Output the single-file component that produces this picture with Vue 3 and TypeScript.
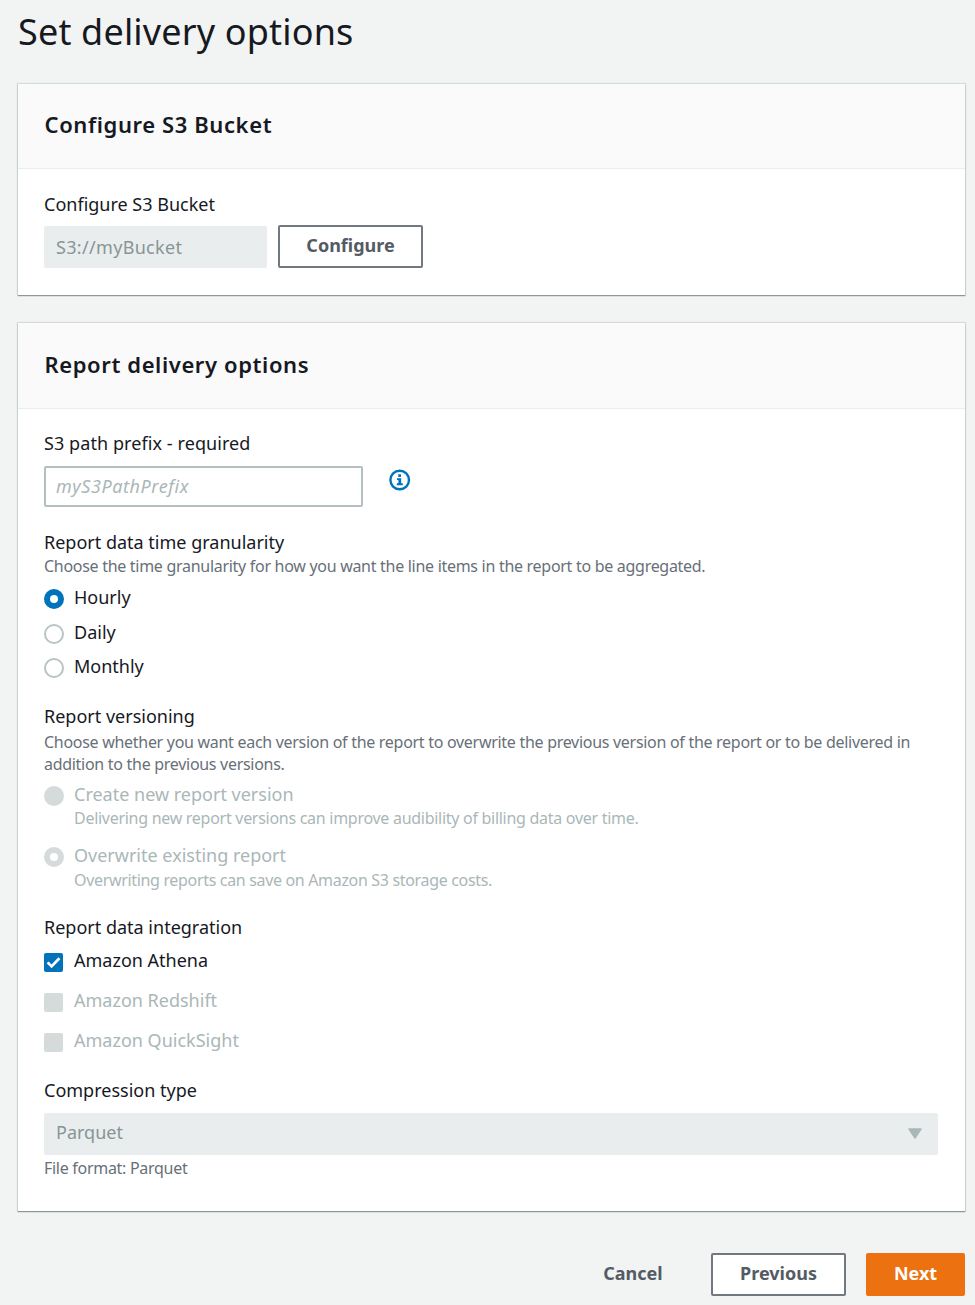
<script setup lang="ts">
interface Option {
  id: string
  label: string
  hint?: string
  checked?: boolean
  disabled?: boolean
}

const granularity: Option[] = [
  { id: 'hourly', label: 'Hourly', checked: true },
  { id: 'daily', label: 'Daily' },
  { id: 'monthly', label: 'Monthly' },
]

const versioning: Option[] = [
  {
    id: 'create',
    label: 'Create new report version',
    hint: 'Delivering new report versions can improve audibility of billing data over time.',
    disabled: true,
  },
  {
    id: 'overwrite',
    label: 'Overwrite existing report',
    hint: 'Overwriting reports can save on Amazon S3 storage costs.',
    checked: true,
    disabled: true,
  },
]

const integrations: Option[] = [
  { id: 'athena', label: 'Amazon Athena', checked: true },
  { id: 'redshift', label: 'Amazon Redshift', disabled: true },
  { id: 'quicksight', label: 'Amazon QuickSight', disabled: true },
]
</script>

<template>
  <main class="page">
    <h1 class="title">Set delivery options</h1>

    <section class="card bucket">
      <header class="card-head"><h2>Configure S3 Bucket</h2></header>
      <div class="card-body">
        <div class="label bucket-label">Configure S3 Bucket</div>
        <div class="row">
          <div class="field filled bucket-field"><span>S3://myBucket</span></div>
          <button class="btn outline configure"><span>Configure</span></button>
        </div>
      </div>
    </section>

    <section class="card delivery">
      <header class="card-head"><h2>Report delivery options</h2></header>
      <div class="card-body">
        <div class="label prefix-label">S3 path prefix - required</div>
        <div class="row prefix-row">
          <div class="field prefix-field"><span>myS3PathPrefix</span></div>
          <svg class="info" viewBox="0 0 22 22" width="22" height="22">
            <circle cx="10.7" cy="11" r="9.3" fill="none" stroke="#0073bb" stroke-width="2.4" />
            <rect x="9.2" y="5.3" width="2.8" height="2.6" fill="#0073bb" />
            <path d="M8 9.2H12.2V14.2H13.8V16.2H7.8V14.2H9.4V11H8Z" fill="#0073bb" />
          </svg>
        </div>

        <div class="label">Report data time granularity</div>
        <p class="desc granularity-desc">Choose the time granularity for how you want the line items in the report to be aggregated.</p>
        <div class="options granularity">
          <div v-for="o in granularity" :key="o.id" class="option">
            <i class="radio" :class="{ on: o.checked }"></i>
            <span class="option-label">{{ o.label }}</span>
          </div>
        </div>

        <div class="label">Report versioning</div>
        <p class="desc versioning-desc">
          Choose whether you want each version of the report to overwrite the previous version of the report or to be delivered in<br />
          addition to the previous versions.
        </p>
        <div class="options versioning">
          <div v-for="o in versioning" :key="o.id" class="option off" :class="o.id">
            <i class="radio disabled" :class="{ on: o.checked }"></i>
            <div>
              <div class="option-label">{{ o.label }}</div>
              <div class="hint">{{ o.hint }}</div>
            </div>
          </div>
        </div>

        <div class="label">Report data integration</div>
        <div class="options integrations">
          <div v-for="o in integrations" :key="o.id" class="option" :class="{ off: o.disabled }">
            <i class="check" :class="{ disabled: o.disabled }">
              <svg v-if="o.checked" viewBox="0 0 19 19" width="19" height="19">
                <path d="M3.6 9.4L7.6 13.4L15.4 5.2" fill="none" stroke="#fff" stroke-width="2.7" />
              </svg>
            </i>
            <span class="option-label">{{ o.label }}</span>
          </div>
        </div>

        <div class="label compression-label">Compression type</div>
        <div class="field filled select">
          <span>Parquet</span>
          <svg viewBox="0 0 14 11" width="14" height="11">
            <path d="M1 1H13L7 10Z" fill="#aab7b8" stroke="#aab7b8" stroke-width="1.4" stroke-linejoin="round" />
          </svg>
        </div>
        <p class="desc format">File format: Parquet</p>
      </div>
    </section>

    <footer class="actions">
      <button class="btn cancel"><span>Cancel</span></button>
      <button class="btn outline previous"><span>Previous</span></button>
      <button class="btn primary"><span>Next</span></button>
    </footer>
  </main>
</template>

<style>
html,
body {
  background: #f2f4f4;
}
</style>

<style scoped>
.page {
  box-sizing: border-box;
  width: 975px;
  height: 1305px;
  padding: 8px 10px 0 18px;
  overflow: hidden;
  background: #f2f4f4;
  color: #16191f;
  font-family: 'Noto Sans', 'Open Sans', sans-serif;
}
h1,
h2,
p {
  margin: 0;
}
.title {
  font-size: 36px;
  line-height: 48px;
  font-weight: 400;
  letter-spacing: 0.17px;
  white-space: nowrap;
}
.card {
  box-sizing: border-box;
  background: #fff;
  box-shadow: 0 1px 1px 0 #8d9799, 0 0 1px 1px #d5dbdb;
}
.bucket {
  margin-top: 28px;
  height: 211px;
}
.delivery {
  margin-top: 28px;
  height: 888px;
}
.card-head {
  box-sizing: border-box;
  height: 85px;
  padding: 26px 26.5px 0;
  background: #fafafa;
  border-bottom: 1px solid #eaeded;
}
.delivery .card-head {
  height: 86px;
  padding-top: 27px;
}
h2 {
  font-size: 22px;
  line-height: 28px;
  font-weight: 600;
  letter-spacing: 0.6px;
  white-space: nowrap;
}
.card-body {
  padding: 22px 27px 0 26px;
}
.label,
.option-label {
  font-size: 18px;
  line-height: 24px;
  white-space: nowrap;
}
.bucket-label {
  margin-top: 1px;
}
.prefix-label {
  letter-spacing: 0.08px;
}
.desc {
  font-size: 16px;
  line-height: 22px;
  letter-spacing: -0.29px;
  color: #687078;
  white-space: nowrap;
}
.row {
  display: flex;
  margin-top: 10px;
}
.field {
  box-sizing: border-box;
  display: flex;
  align-items: center;
  padding: 0 12px;
  border-radius: 2px;
  font-size: 18px;
  line-height: 24px;
}
.filled {
  background: #eaeded;
  color: #879596;
}
.bucket-field {
  width: 223px;
  height: 42px;
  letter-spacing: 0.32px;
}
.prefix-row {
  margin: 11px 0 23px;
}
.prefix-field {
  width: 319px;
  height: 41px;
  padding: 0 10px 2px;
  border: 2px solid #b3bfc0;
  color: #aab7b8;
  font-style: italic;
  letter-spacing: 0.57px;
}
.info {
  margin: 3px 0 0 26px;
}
.btn {
  box-sizing: border-box;
  height: 43px;
  padding: 0 0 3px;
  border: 0;
  border-radius: 2px;
  background: none;
  color: #545b64;
  font-family: inherit;
  font-size: 18px;
  line-height: 24px;
  font-weight: 700;
}
.outline {
  border: 2px solid #717880;
  background: #fff;
}
.configure {
  width: 145px;
  margin: -1px 0 0 11px;
}
.granularity-desc {
  margin-top: 1px;
}
.option {
  display: flex;
}
.radio,
.check {
  box-sizing: border-box;
  flex: none;
  width: 20px;
  height: 20px;
  margin: 4px 10px 0 0;
  border: 2px solid #b9c4c5;
  border-radius: 50%;
}
.radio.on {
  border: 6px solid #0073bb;
}
.radio.disabled {
  border-color: #d5dbdb;
}
.radio.disabled:not(.on) {
  background: #d5dbdb;
}
.check {
  width: 19px;
  height: 19px;
  margin: 5px 11px 0 0;
  border: 0;
  border-radius: 2px;
  background: #0073bb;
}
.check svg {
  display: block;
}
.check.disabled {
  background: #d5dbdb;
}
.off {
  color: #aab7b8;
}
.granularity {
  display: grid;
  gap: 10.5px;
  margin: 8px 0 26px;
}
.versioning-desc {
  margin-top: 3px;
}
.versioning {
  display: grid;
  gap: 14px;
  margin: 7px 0 24px;
}
.hint {
  margin-top: 1px;
  font-size: 16px;
  line-height: 22px;
  letter-spacing: -0.28px;
  white-space: nowrap;
}
.overwrite .hint {
  margin-top: 2px;
  letter-spacing: -0.33px;
}
.integrations {
  display: grid;
  gap: 16px;
  margin: 9px 0 26px;
}
.select {
  height: 42px;
  margin-top: 11px;
  justify-content: space-between;
  padding: 0 16px 4px 12px;
}
.select svg {
  margin-top: 3px;
}
.format {
  margin-top: 2px;
}
.actions {
  display: flex;
  justify-content: flex-end;
  margin-top: 42px;
}
.cancel {
  width: 60px;
  margin-right: 48px;
}
.previous {
  width: 135px;
  margin-right: 20px;
}
.primary {
  width: 99px;
  background: #ec7211;
  color: #fff;
}
</style>
